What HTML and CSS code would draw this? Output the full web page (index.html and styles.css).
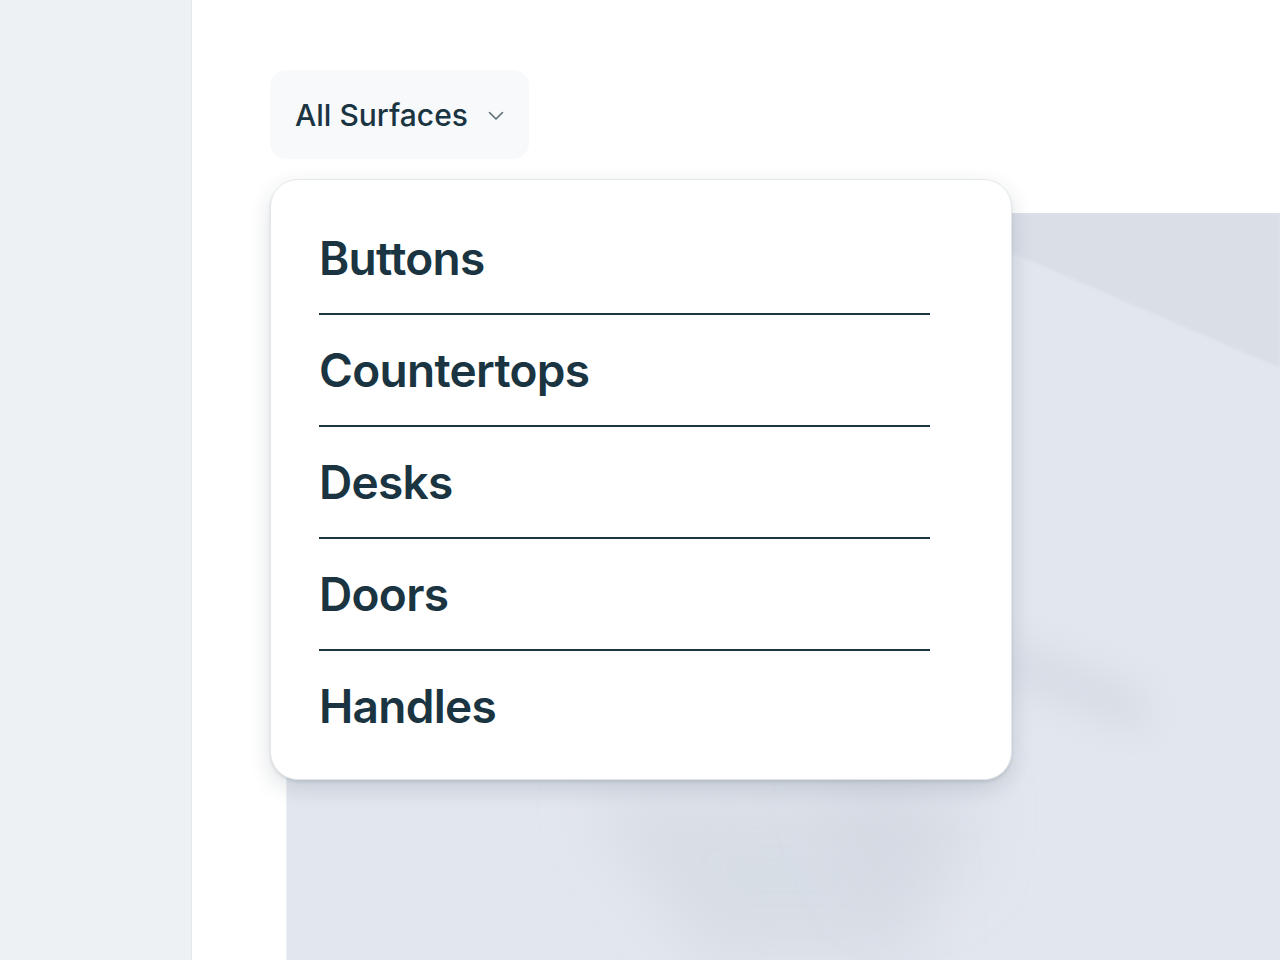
FILE: index.html
```html
<!DOCTYPE html>
<html lang="en">
<head>
<meta charset="utf-8">
<title>All Surfaces</title>
<link rel="stylesheet" href="styles.css">
</head>
<body>
<div class="layout">
  <aside class="sidebar"></aside>
  <main class="main">
    <div class="filter">
      <button class="select" type="button">
        <span class="select-label">All Surfaces</span>
        <svg class="chevron" width="16" height="10" viewBox="0 0 16 10" aria-hidden="true">
          <polyline points="1.5,1.5 8,8 14.5,1.5" fill="none" stroke="#5b6c77" stroke-width="1.6" stroke-linecap="round" stroke-linejoin="round"/>
        </svg>
      </button>
      <ul class="menu">
        <li class="menu-item">Buttons</li>
        <li class="menu-item">Countertops</li>
        <li class="menu-item">Desks</li>
        <li class="menu-item">Doors</li>
        <li class="menu-item">Handles</li>
      </ul>
    </div>
    <div class="hero">
      <svg class="hero-art" width="994" height="747" viewBox="0 0 994 747" preserveAspectRatio="none" aria-hidden="true">
        <defs>
          <filter id="b1" x="-50%" y="-50%" width="200%" height="200%"><feGaussianBlur stdDeviation="30"/></filter>
          <filter id="b2" x="-50%" y="-50%" width="200%" height="200%"><feGaussianBlur stdDeviation="18"/></filter>
          <filter id="b0" x="-5%" y="-5%" width="110%" height="110%"><feGaussianBlur stdDeviation="1.5"/></filter>
        </defs>
        <rect x="0" y="0" width="994" height="747" fill="#e2e6ee"/>
        <polygon points="633,0 994,0 994,155" fill="#dadfe7" filter="url(#b0)"/>
        <polygon points="300,585 620,575 640,747 420,747" fill="#d5dbe3" opacity="0.8" filter="url(#b1)"/>
        <polygon points="540,575 690,565 680,670 590,690" fill="#d0d6df" opacity="0.55" filter="url(#b1)"/>
        <polygon points="722,425 860,480 860,520 722,470" fill="#cdd3dd" opacity="0.55" filter="url(#b2)"/>
        <rect x="0" y="0" width="1" height="747" fill="#eceff4"/>
      </svg>
    </div>
  </main>
</div>
</body>
</html>
```

FILE: styles.css
```css
* {
  box-sizing: border-box;
}

html, body {
  margin: 0;
  padding: 0;
  height: 100%;
  background: #ffffff;
}

body {
  font-family: Inter, "Noto Sans", "Liberation Sans", sans-serif;
  color: #1a3441;
  overflow: hidden;
}

.layout {
  display: flex;
  width: 1280px;
  height: 960px;
}

.sidebar {
  width: 192px;
  flex: 0 0 192px;
  background: #edf1f4;
  border-right: 1px solid #e2e7eb;
}

.main {
  flex: 1;
  display: flex;
  flex-direction: column;
  padding-top: 70px;
  min-width: 0;
}

.filter {
  position: relative;
  margin-left: 78px;
  z-index: 2;
}

.select {
  display: inline-flex;
  align-items: center;
  gap: 20px;
  height: 89px;
  width: 259px;
  padding: 0 20px 0 25px;
  border: 0;
  border-radius: 16px;
  background: #f7f9fb;
  font-family: inherit;
  font-size: 30px;
  font-weight: 500;
  letter-spacing: 0;
  color: #1a3441;
  cursor: pointer;
  white-space: nowrap;
}

.chevron {
  display: block;
  flex: 0 0 auto;
  margin-top: 2px;
}

.menu {
  position: absolute;
  top: 109px;
  left: 0;
  width: 742px;
  margin: 0;
  padding: 23px 81px 18px 48px;
  list-style: none;
  background: #ffffff;
  border: 1px solid #e4e7ea;
  border-radius: 28px;
  box-shadow: 0 2px 3px rgba(20, 40, 60, 0.10), 0 8px 22px rgba(20, 40, 60, 0.14);
}

.menu-item {
  height: 112px;
  line-height: 110px;
  font-size: 46px;
  font-weight: 600;
  letter-spacing: -0.7px;
  color: #1a3441;
  border-bottom: 2px solid #1a3441;
  white-space: nowrap;
}

.menu-item:last-child {
  height: 110px;
  border-bottom: 0;
}

.hero {
  margin-top: 54px;
  margin-left: 94px;
  flex: 1;
  overflow: hidden;
}

.hero-art {
  display: block;
  width: 994px;
  height: 747px;
}
```
